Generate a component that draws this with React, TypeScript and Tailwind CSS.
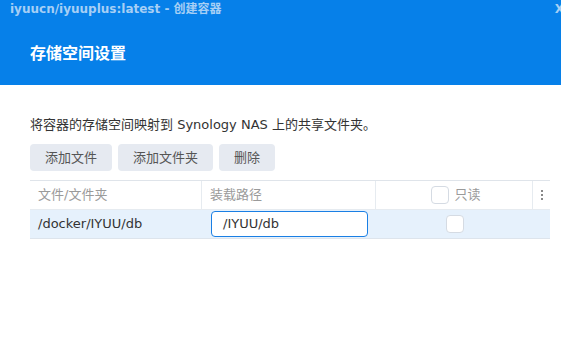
import React from "react";

const font = { fontFamily: '"DejaVu Sans", "Noto Sans CJK SC", sans-serif' };

export default function App() {
  return (
    <div className="w-[561px] h-[361px] bg-white overflow-hidden relative" style={font}>
      <div className="h-[85px] bg-[#0680e9] relative">
        <div className="pl-[10px] pt-[1px] text-[12px] leading-[16px] font-bold text-[#a6cff5] whitespace-nowrap">
          iyuucn/iyuuplus:latest - 创建容器
        </div>
        <div className="absolute right-[-3px] top-[1px] text-[12px] leading-[16px] font-bold text-[#a6cff5]">X</div>
        <div className="pl-[30px] pt-[26px] text-[16px] leading-[22px] font-bold text-white">存储空间设置</div>
      </div>
      <div className="pl-[30px] pr-[11px]">
        <div className="pt-[30px] text-[13px] leading-[20px] text-[#333] whitespace-nowrap">
          将容器的存储空间映射到 Synology NAS 上的共享文件夹。
        </div>
        <div className="flex gap-[6px] mt-[9px]">
          <button className="h-[27px] px-[15px] rounded-[4px] bg-[#e6eaf1] text-[13px] text-[#555]">添加文件</button>
          <button className="h-[27px] px-[15px] rounded-[4px] bg-[#e6eaf1] text-[13px] text-[#555]">添加文件夹</button>
          <button className="h-[27px] px-[15px] rounded-[4px] bg-[#e6eaf1] text-[13px] text-[#555]">删除</button>
        </div>
        <div className="mt-[9px] border-t border-[#dfe4ea]">
          <div className="flex h-[29px] items-center text-[13px] text-[#9a9a9a] border-b border-[#e6ebf0]">
            <div className="w-[172px] h-full flex items-center pl-[8px] border-r border-[#e6ebf0]">文件/文件夹</div>
            <div className="w-[174px] h-full flex items-center pl-[8px] border-r border-[#e6ebf0]">装载路径</div>
            <div className="w-[157px] h-full flex items-center justify-center gap-[5px] border-r border-[#e6ebf0]">
              <span className="w-[18px] h-[18px] ml-[4px] rounded-[4px] border border-[#d5dbe3] bg-white"></span>
              <span>只读</span>
            </div>
            <div className="flex-1 h-full flex flex-col items-center justify-center gap-[2px]">
              <span className="w-[2px] h-[2px] bg-[#888]"></span>
              <span className="w-[2px] h-[2px] bg-[#888]"></span>
              <span className="w-[2px] h-[2px] bg-[#888]"></span>
            </div>
          </div>
          <div className="flex h-[29px] items-center text-[13px] text-[#333] bg-[#e6f1fc] border-b border-[#dde4ec]">
            <div className="w-[172px] pl-[8px]">/docker/IYUU/db</div>
            <div className="w-[174px] pl-[9px] pr-[8px]">
              <div className="h-[26px] rounded-[4px] border border-[#1a7fe4] bg-white flex items-center pl-[11px]">/IYUU/db</div>
            </div>
            <div className="w-[157px] flex justify-center">
              <span className="w-[18px] h-[18px] rounded-[4px] border border-[#d5dbe3] bg-white"></span>
            </div>
          </div>
        </div>
      </div>
    </div>
  );
}
